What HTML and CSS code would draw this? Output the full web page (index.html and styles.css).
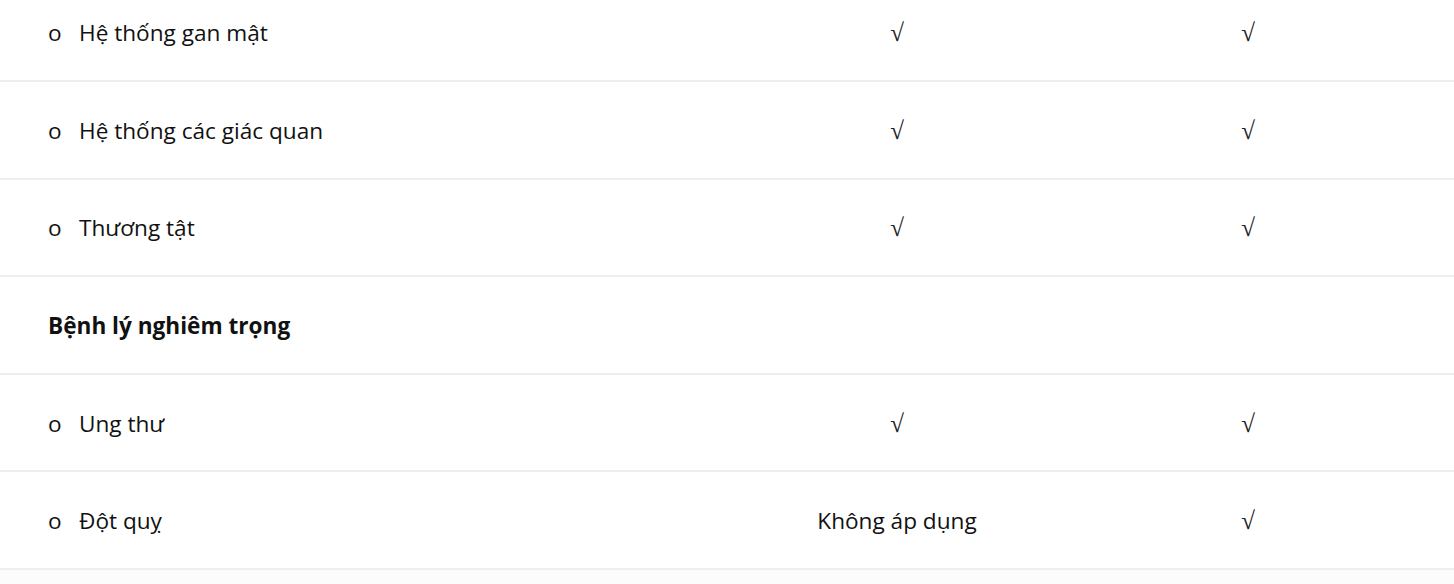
FILE: index.html
```html
<!DOCTYPE html>
<html lang="vi">
<head>
<meta charset="utf-8">
<title>Bảng quyền lợi</title>
<link rel="stylesheet" href="styles.css">
</head>
<body>
<div class="table">
  <div class="row">
    <div class="cell name"><span class="bullet">o</span>Hệ thống gan mật</div>
    <div class="cell mid"><span class="check">√</span></div>
    <div class="cell mid"><span class="check">√</span></div>
  </div>
  <div class="row">
    <div class="cell name"><span class="bullet">o</span>Hệ thống các giác quan</div>
    <div class="cell mid"><span class="check">√</span></div>
    <div class="cell mid"><span class="check">√</span></div>
  </div>
  <div class="row">
    <div class="cell name"><span class="bullet">o</span>Thương tật</div>
    <div class="cell mid"><span class="check">√</span></div>
    <div class="cell mid"><span class="check">√</span></div>
  </div>
  <div class="row">
    <div class="cell name head">Bệnh lý nghiêm trọng</div>
    <div class="cell mid"></div>
    <div class="cell mid"></div>
  </div>
  <div class="row">
    <div class="cell name"><span class="bullet">o</span>Ung thư</div>
    <div class="cell mid"><span class="check">√</span></div>
    <div class="cell mid"><span class="check">√</span></div>
  </div>
  <div class="row">
    <div class="cell name"><span class="bullet">o</span>Đột quỵ</div>
    <div class="cell mid">Không áp dụng</div>
    <div class="cell mid"><span class="check">√</span></div>
  </div>
  <div class="row alt">
    <div class="cell name"></div>
    <div class="cell mid"></div>
    <div class="cell mid"></div>
  </div>
</div>
</body>
</html>
```

FILE: styles.css
```css
html, body {
  margin: 0;
  padding: 0;
  background: #ffffff;
  overflow: hidden;
}
body {
  font-family: "Open Sans", "Liberation Sans", sans-serif;
  font-size: 22.6px;
  color: #111111;
}
.table {
  margin-top: -15.5px;
  width: 1454px;
}
.row {
  display: grid;
  grid-template-columns: 752px 290px 412px;
  height: 97.6px;
  box-sizing: border-box;
  border-bottom: 2px solid #eeeeee;
  align-items: center;
}
.row.alt {
  background: #fcfcfc;
  border-bottom: none;
}
.cell {
  line-height: 30px;
  padding-top: 2px;
}
.name {
  padding-left: 48px;
}
.bullet {
  display: inline-block;
  width: 31px;
}
.head {
  font-weight: 700;
}
.mid {
  text-align: center;
}
.check {
  font-family: "Liberation Serif", "DejaVu Serif", serif;
  font-size: 25px;
  color: #222222;
}
```
